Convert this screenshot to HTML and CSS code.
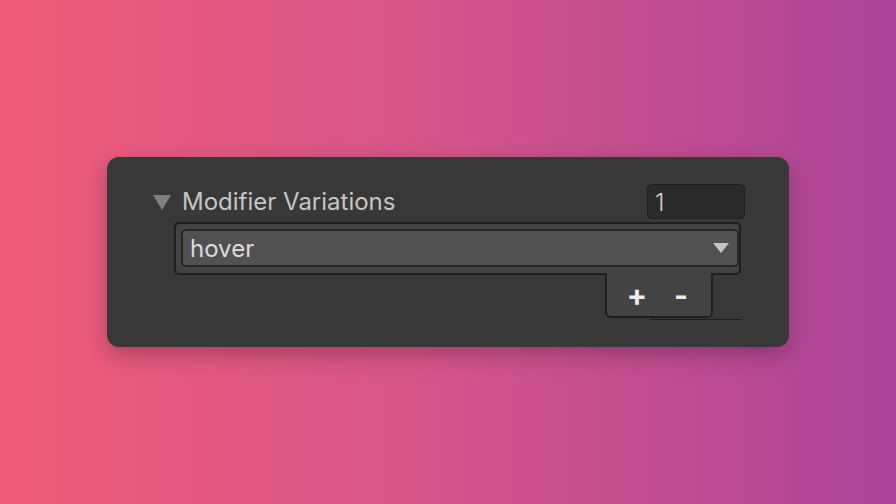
FILE: index.html
```html
<!DOCTYPE html>
<html lang="en">
<head>
    <meta charset="UTF-8">
    <title>Modifier Variations</title>
    <link rel="stylesheet" href="styles.css">
</head>
<body>
    <div class="panel">
        <div class="header">
            <div class="foldout">
                <span class="fold-arrow"></span>
                <span class="title">Modifier Variations</span>
            </div>
            <div class="count">1</div>
        </div>
        <div class="list">
            <div class="dropdown">
                <span>hover</span>
                <span class="drop-arrow"></span>
            </div>
        </div>
        <div class="footer-row">
            <div class="footer">
                <span class="btn">+</span>
                <span class="btn">-</span>
            </div>
        </div>
        <div class="footer-line"></div>
    </div>
</body>
</html>
```

FILE: styles.css
```css
body {
    margin: 0;
    height: 504px;
    background: linear-gradient(90deg, #f05c79 0%, #d4548a 50%, #ab4498 100%);
    font-family: Inter, "Noto Sans", sans-serif;
    display: flex;
    align-items: center;
    justify-content: center;
}
.panel {
    width: 682px;
    height: 190px;
    box-sizing: border-box;
    padding: 27px 44px 0 46px;
    background-color: #383838;
    border-radius: 12px;
    box-shadow: 0 8px 22px rgba(0, 0, 0, 0.25);
}
.header {
    display: flex;
    justify-content: space-between;
    align-items: center;
    height: 35px;
}
.foldout {
    display: flex;
    align-items: center;
    gap: 11px;
}
.fold-arrow {
    width: 0;
    height: 0;
    border-left: 9px solid transparent;
    border-right: 9px solid transparent;
    border-top: 15px solid #7f7f7f;
    margin-top: 2px;
}
.title {
    color: #c6c6c6;
    font-size: 24px;
}
.count {
    width: 98px;
    height: 35px;
    box-sizing: border-box;
    background-color: #2a2a2a;
    border: 1px solid #202020;
    border-radius: 5px;
    color: #d2d2d2;
    font-size: 24px;
    font-weight: 300;
    line-height: 35px;
    padding-left: 7px;
}
.list {
    margin: 3px 4px 0 21px;
    height: 53px;
    box-sizing: border-box;
    background-color: #434343;
    border: 2px solid #1e1e1e;
    border-radius: 5px;
    padding: 5px 0 0 5px;
}
.dropdown {
    height: 38px;
    box-sizing: border-box;
    background-color: #515151;
    border: 2px solid #262626;
    border-radius: 5px;
    display: flex;
    align-items: center;
    justify-content: space-between;
    padding: 0 8px 0 7px;
    color: #dcdcdc;
    font-size: 24px;
}
.drop-arrow {
    width: 0;
    height: 0;
    border-left: 8px solid transparent;
    border-right: 8px solid transparent;
    border-top: 10px solid #c4c4c4;
}
.footer-row {
    display: flex;
    justify-content: flex-end;
    margin: -2px 32px 0 0;
}
.footer {
    width: 108px;
    height: 45px;
    box-sizing: border-box;
    background-color: #434343;
    border: 2px solid #1e1e1e;
    border-top: none;
    border-radius: 0 0 6px 6px;
    display: flex;
    justify-content: center;
    gap: 22px;
    padding-top: 4px;
}
.btn {
    color: #ececec;
    font-size: 30px;
    font-weight: bold;
    width: 22px;
    text-align: center;
}
.footer-line {
    width: 91px;
    height: 1px;
    background-color: #1e1e1e;
    margin: 1px 4px 0 auto;
}
```
